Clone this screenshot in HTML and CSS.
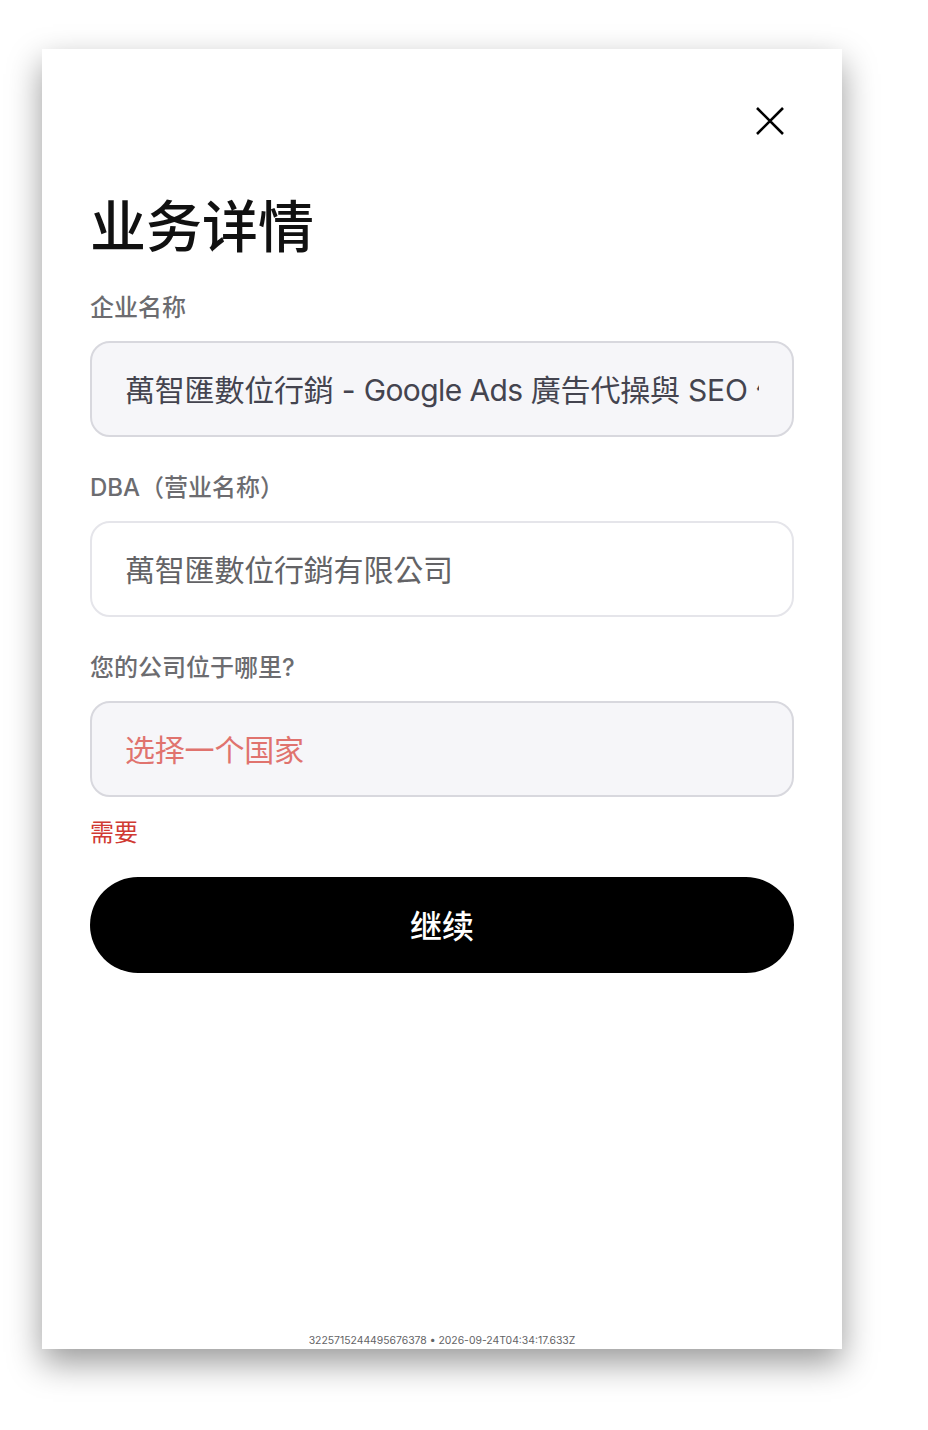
FILE: index.html
```html
<!DOCTYPE html>
<html lang="zh">
<head>
    <meta charset="UTF-8">
    <meta name="viewport" content="width=device-width, initial-scale=1.0">
    <title>业务详情</title>
    <link rel="stylesheet" href="styles.css">
</head>
<body>
    <div class="modal">
        <div class="modal-top">
            <button class="close-btn" type="button" aria-label="Close">
                <svg width="30" height="30" viewBox="0 0 30 30" fill="none" stroke="#000" stroke-width="2.6">
                    <path d="M2 2L28 28M28 2L2 28"/>
                </svg>
            </button>
        </div>

        <h1>业务详情</h1>

        <div class="form-group">
            <label>企业名称</label>
            <div class="field field-filled" lang="zh-TW">
                <div class="field-value">萬智匯數位行銷 - <span class="latin">Google Ads</span> 廣告代操與 SEO 優化</div>
            </div>
        </div>

        <div class="form-group">
            <label>DBA（营业名称）</label>
            <div class="field" lang="zh-TW">
                <div class="field-value">萬智匯數位行銷有限公司</div>
            </div>
        </div>

        <div class="form-group">
            <label>您的公司位于哪里?</label>
            <div class="field field-filled field-error">
                <div class="field-value">选择一个国家</div>
            </div>
            <p class="error-text">需要</p>
        </div>

        <button class="btn-continue" type="button">继续</button>

        <div class="trace">3225715244495676378 • 2026-09-24T04:34:17.633Z</div>
    </div>
</body>
</html>
```

FILE: styles.css
```css
* {
    box-sizing: border-box;
}

html, body {
    margin: 0;
    padding: 0;
    height: 1430px;
    overflow: hidden;
    background: #fff;
}

body {
    padding: 49px 0 0 42px;
    font-family: Inter, "Noto Sans CJK SC", sans-serif;
}

.modal {
    position: relative;
    display: flex;
    flex-direction: column;
    width: 800px;
    height: 1300px;
    padding: 0 48px;
    background: #fff;
    box-shadow: 0 14px 32px rgba(0, 0, 0, 0.4);
}

.modal-top {
    display: flex;
    justify-content: flex-end;
    padding: 57px 9px 0 0;
}

.close-btn {
    display: flex;
    width: 30px;
    height: 30px;
    padding: 0;
    background: none;
    border: none;
}

h1 {
    margin: 51px 0 0;
    font-size: 56px;
    line-height: 80px;
    font-weight: 500;
    color: #111;
}

.form-group {
    margin-top: 33px;
}

h1 + .form-group {
    margin-top: 23px;
}

.form-group label {
    display: block;
    margin-bottom: 15px;
    font-size: 24px;
    line-height: 36px;
    font-weight: 500;
    color: #6c6c70;
}

.field {
    display: flex;
    align-items: center;
    width: 100%;
    height: 96px;
    padding: 2px 33px 0;
    font-size: 30px;
    color: #636366;
    background: #fff;
    border: 2px solid #e5e5ea;
    border-radius: 20px;
}

.field[lang="zh-TW"] {
    font-family: Inter, "Noto Sans CJK TC", sans-serif;
}

.field-value {
    width: 635px;
    overflow: hidden;
    white-space: nowrap;
    line-height: 40px;
    letter-spacing: -0.2px;
}

.latin {
    letter-spacing: -0.6px;
}

.field-filled {
    color: #44444f;
    background: #f6f6f9;
    border-color: #d8d8de;
}

.field-error {
    color: #e0736e;
}

.error-text {
    margin: 18px 0 0;
    font-size: 24px;
    line-height: 36px;
    color: #d03a33;
}

.btn-continue {
    width: 100%;
    height: 96px;
    margin-top: 26px;
    padding: 0 0 3px;
    font-family: Inter, "Noto Sans CJK SC", sans-serif;
    font-size: 32px;
    font-weight: 500;
    color: #fff;
    background: #000;
    border: none;
    border-radius: 48px;
}

.trace {
    position: absolute;
    left: 0;
    right: 0;
    bottom: 0;
    text-align: center;
    font-size: 10.4px;
    line-height: 16px;
    color: #636366;
}
```
